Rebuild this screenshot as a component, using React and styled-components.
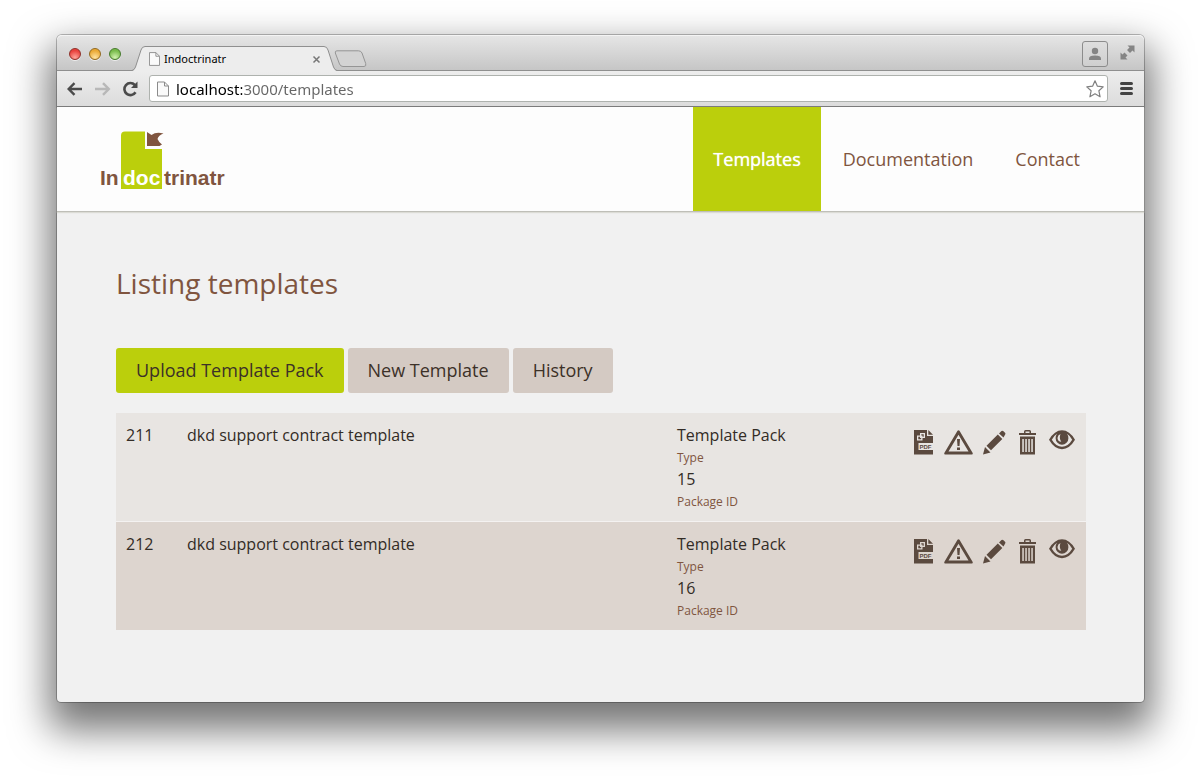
import React from "react";
import styled, { createGlobalStyle, css } from "styled-components";

const green = "#bbcf0c";
const brown = "#80553f";
const iconBrown = "#5b4a3f";

const GlobalStyle = createGlobalStyle`
  *, *::before, *::after { box-sizing: border-box; }
  body {
    margin: 0;
    background: #fff;
    font-family: "Open Sans", "Noto Sans", sans-serif;
    color: #332c26;
  }
`;

const Desktop = styled.div`
  padding: 35px 57px 78px;
`;

const BrowserWindow = styled.div`
  border-radius: 5px 5px 4px 4px;
  background: #f1f1f1;
  box-shadow: 0 0 0 1px rgba(0, 0, 0, 0.25), 0 20px 38px 8px rgba(0, 0, 0, 0.54);
`;

const TitleBar = styled.div`
  display: flex;
  align-items: flex-start;
  height: 36px;
  padding: 0 9px 0 12px;
  border-radius: 5px 5px 0 0;
  border-bottom: 1px solid #8f8f8f;
  background: linear-gradient(#e6e6e6, #c6c6c6);
  box-shadow: inset 0 1px 0 #f4f4f4;
`;

const Lights = styled.div`
  display: flex;
  gap: 8px;
  padding-top: 13px;
`;

const lightColors = {
  red: ["#ffa59a", "#e8413c", "#8f3029"],
  yellow: ["#ffe3a0", "#eaa934", "#92691f"],
  green: ["#d2f3b0", "#78bb4b", "#457a2b"],
};

const Light = styled.button`
  width: 12px;
  height: 12px;
  padding: 0;
  border: 1px solid ${(p) => lightColors[p.$tone][2]};
  border-radius: 50%;
  background: radial-gradient(circle at 50% 85%, ${(p) => lightColors[p.$tone][0]}, ${(p) => lightColors[p.$tone][1]} 70%);
  box-shadow: 0 1px 0 #eee;
`;

const TabStrip = styled.div`
  display: flex;
  flex: 1;
  align-items: flex-start;
  padding: 11px 0 0 11px;
  svg { display: block; flex: none; }
`;

const Tab = styled.div`
  display: flex;
  height: 25px;
`;

const TabBody = styled.div`
  display: flex;
  align-items: center;
  width: 179px;
  height: 25px;
  padding: 0 3px 0 4px;
  border-top: 1px solid #8f8f8f;
  background: #ededed;
`;

const TabTitle = styled.span`
  flex: 1;
  padding-left: 4px;
  font: 11px/16px "Noto Sans", "Open Sans", sans-serif;
  color: #000;
`;

const PlainButton = styled.button`
  display: flex;
  align-items: center;
  justify-content: center;
  padding: 0;
  border: 0;
  background: none;
  svg { display: block; }
`;

const NewTab = styled(PlainButton)`
  margin: 4px 0 0 -3px;
`;

const WindowTools = styled.div`
  display: flex;
  align-items: flex-start;
  gap: 11px;
  padding-top: 6px;
`;

const ProfileButton = styled(PlainButton)`
  width: 26px;
  height: 26px;
  border: 1px solid #8c8c8c;
  border-radius: 3px;
  background: linear-gradient(#dedede, #cfcfcf);
`;

const ExpandButton = styled(PlainButton)`
  width: 16px;
  height: 22px;
`;

const Toolbar = styled.div`
  display: flex;
  align-items: center;
  height: 36px;
  padding: 0 10px 0 9px;
  border-bottom: 1px solid #7b7b7b;
  background: linear-gradient(#ededed, #dcdcdc);
`;

const NavButtons = styled.div`
  display: flex;
  gap: 10px;
  padding-right: 10px;
`;

const AddressBar = styled.label`
  display: flex;
  flex: 1;
  align-items: center;
  height: 27px;
  margin-right: 11px;
  padding: 0 3px 0 7px;
  border: 1px solid #aeb2ae;
  border-radius: 3px;
  background: #fff;
  svg { display: block; flex: none; }
`;

const AddressInput = styled.input`
  flex: 1;
  min-width: 0;
  height: 22px;
  margin-left: 7px;
  padding: 0;
  border: 0;
  outline: 0;
  font: 15px/22px "Noto Sans", "Open Sans", sans-serif;
  color: transparent;
  background: linear-gradient(90deg, #000 66px, #666 66px);
  -webkit-background-clip: text;
  background-clip: text;
`;

const Header = styled.header`
  display: flex;
  justify-content: space-between;
  height: 105px;
  padding: 0 44px 0 43px;
  border-bottom: 1px solid #bfbfb8;
  background: #fdfdfd;
  box-shadow: 0 1px 1px #dcdcd6;
`;

const LogoLink = styled.a`
  padding-top: 24px;
  svg { display: block; }
`;

const Nav = styled.nav`
  display: flex;
  gap: 2px;
`;

const NavLink = styled.a`
  display: flex;
  align-items: center;
  padding: 0 20px;
  font-size: 18px;
  line-height: 24px;
  text-decoration: none;
  color: ${brown};
  ${(p) => p.$active && css`
    background: ${green};
    color: #fff;
    text-shadow: 0 0 1px #fff;
  `}
`;

const Main = styled.main`
  padding: 51px 58px 72px 59px;
`;

const Title = styled.h1`
  margin: 0;
  font-size: 28px;
  line-height: 40px;
  font-weight: 400;
  color: ${brown};
`;

const ButtonRow = styled.div`
  display: flex;
  gap: 4px;
  margin: 45px 0 20px;
`;

const ActionButton = styled.button`
  height: 45px;
  padding: 0 20px 2px;
  border: 0;
  border-radius: 3px;
  font: 18px/24px "Open Sans", sans-serif;
  color: #3c3128;
  background: ${(p) => (p.$primary ? green : "#d4cac3")};
`;

const Table = styled.table`
  width: 100%;
  table-layout: fixed;
  border-collapse: separate;
  border-spacing: 0;
`;

const Row = styled.tr`
  background: #e8e5e2;
  &:nth-child(even) { background: #ddd5cf; }
`;

const Cell = styled.td`
  width: ${(p) => p.$width || "auto"};
  padding: 11px 11px 9px 10px;
  vertical-align: top;
  font-size: 16px;
  line-height: 22px;
  ${Row} + ${Row} & { border-top: 1px solid #f4f2f1; }
`;

const Details = styled.dl`
  display: flex;
  flex-direction: column;
  margin: 0;
`;

const Detail = styled.div`
  display: flex;
  flex-direction: column-reverse;
`;

const Value = styled.dd`
  margin: 0;
`;

const Term = styled.dt`
  padding-top: 2px;
  font-size: 12px;
  line-height: 20px;
  color: ${brown};
`;

const Actions = styled.div`
  display: flex;
  justify-content: flex-end;
  align-items: flex-start;
  gap: 10px;
  padding-top: 6px;
  color: ${iconBrown};
`;

const IconLink = styled.a`
  color: inherit;
  svg { display: block; }
`;

const PageIcon = ({ width, height }) => (
  <svg width={width} height={height} viewBox="0 0 12 15" fill="#fafafa" stroke="#8b8b8b">
    <path d="M.5.5h7l4 4v10H.5z" />
    <path d="M7.500.5v4h4" fill="none" />
  </svg>
);

const Logo = () => (
  <svg width="128" height="60" viewBox="0 0 128 60" fontFamily='"Liberation Sans", Arial, sans-serif' fontWeight="700" fontSize="21">
    <path d="M25 .5H45V18H62V58H21V4.500Q21 .5 25 .5Z" fill={green} />
    <path d="M47 1L51.500 4Q56 .5 63.500 2.500Q58.500 4 57.500 8Q59 11.500 62 13.500L59.500 15H47Z" fill={brown} />
    <text x="0" y="54" fill={brown}>In</text>
    <text x="23" y="54" fill="#fff">doc</text>
    <text x="64" y="54" fill={brown}>trinatr</text>
  </svg>
);

const PdfIcon = () => (
  <svg width="20" height="25" viewBox="0 0 20 25" fill="currentColor">
    <path fillRule="evenodd" d="M0 0H13V6H19V13H4.500V20H19V24.500H0ZM6 3V5.500H3V10.500H8.500V8H11V3ZM7.300 4.300H9.700V6.700H8.500V5.500H7.300ZM4.300 6.800H6V8H7.200V9.200H4.300Z" />
    <path d="M14.300 0L19 4.700H14.300Z" />
    <text x="5.500" y="18.700" fontFamily='"Liberation Sans", Arial, sans-serif' fontWeight="700" fontSize="6">PDF</text>
  </svg>
);

const WarningIcon = () => (
  <svg width="29" height="25" viewBox="0 0 29 25" fill="currentColor">
    <path fillRule="evenodd" d="M13.500 .8Q14.500 -.4 15.500 .8L28.700 23Q29 24.500 28 24.500H1Q0 24.500 .3 23ZM14.500 4.800L4.500 21.500H24.500Z" />
    <path d="M13 9h3l-.5 7h-2zM13 17.500h3v2.500h-3z" />
  </svg>
);

const PencilIcon = () => (
  <svg width="23" height="25" viewBox="0 0 23 25" fill="currentColor">
    <path d="M0 24.500l2-7.500 5.500 5.500zM3.500 15.800L14.800 4.500l4.500 4.500L8 20.300zM16 3.500L18.500 1q1-.8 2 .2l1.500 1.500q1 1 0 2L20.500 7.600z" />
  </svg>
);

const TrashIcon = () => (
  <svg width="23" height="25" viewBox="0 0 23 25" fill="currentColor">
    <path fillRule="evenodd" d="M3 3h5V1.500Q8 0 9.500 0h4Q15 0 15 1.500V3h5v2H3zM9.500 3h4V1.500h-4zM4 6.500h15V24.500H4zM6.300 9v13h1.500V9zM9.300 9v13h1.500V9zM12.300 9v13h1.500V9zM15.300 9v13h1.500V9z" />
  </svg>
);

const EyeIcon = () => (
  <svg width="26" height="20" viewBox="0 0 26 20" fill="currentColor">
    <path fillRule="evenodd" d="M0 9.800Q5.500 .3 13 .3T26 9.800Q20.500 19.200 13 19.200T0 9.800ZM2.800 9.800Q7 16.800 13 16.800T23.200 9.800Q21 5.500 18 3.700Q19.400 5.500 19.400 8.300A6.400 6.400 0 0 1 6.600 8.300Q6.600 5.500 8 3.700Q5 5.500 2.800 9.800ZM8.500 8A4.500 4.500 0 0 1 11.500 4Q9.800 8 12.300 11.800Q8.700 11.500 8.500 8Z" />
  </svg>
);

const rowActions = [
  ["Create PDF", PdfIcon],
  ["Show warnings", WarningIcon],
  ["Edit", PencilIcon],
  ["Delete", TrashIcon],
  ["Preview", EyeIcon],
];

const templates = [
  { id: 211, name: "dkd support contract template", type: "Template Pack", packageId: 15 },
  { id: 212, name: "dkd support contract template", type: "Template Pack", packageId: 16 },
];

const BrowserChrome = () => (
  <>
    <TitleBar>
      <Lights>
        <Light $tone="red" aria-label="Close window" />
        <Light $tone="yellow" aria-label="Minimize window" />
        <Light $tone="green" aria-label="Zoom window" />
      </Lights>
      <TabStrip>
        <Tab>
          <svg width="13" height="25" viewBox="0 0 13 25">
            <path d="M0 25Q2.500 24 3.500 21L9 4Q10 .5 13 .5V25Z" fill="#ededed" />
            <path d="M0 24.500Q2.500 24 3.500 21L9 4Q10 .5 13 .5" fill="none" stroke="#8f8f8f" />
          </svg>
          <TabBody>
            <PageIcon width="11" height="14" />
            <TabTitle>Indoctrinatr</TabTitle>
            <PlainButton aria-label="Close tab">
              <svg width="9" height="9" viewBox="0 0 9 9" stroke="#777" strokeWidth="1.500"><path d="M1.500 1.500l6 6M7.500 1.500l-6 6" /></svg>
            </PlainButton>
          </TabBody>
          <svg width="13" height="25" viewBox="0 0 13 25">
            <path d="M13 25Q10.500 24 9.500 21L4 4Q3 .5 0 .5V25Z" fill="#ededed" />
            <path d="M13 24.500Q10.500 24 9.500 21L4 4Q3 .5 0 .5" fill="none" stroke="#8f8f8f" />
          </svg>
        </Tab>
        <NewTab aria-label="New tab">
          <svg width="33" height="18" viewBox="0 0 33 18"><path d="M3 .8H24.500Q27 .8 28 3L31.700 13.500Q32.500 16.500 30 16.500H9Q6.500 16.500 5.500 14L1.300 3Q.8 .8 3 .8Z" fill="#d3d3d3" stroke="#959595" /></svg>
        </NewTab>
      </TabStrip>
      <WindowTools>
        <ProfileButton aria-label="Profile">
          <svg width="14" height="14" viewBox="0 0 14 14" fill="#858585"><circle cx="7" cy="4" r="3.200" /><path d="M1 13V11.500Q1 8.500 7 8.500T13 11.500V13Z" /></svg>
        </ProfileButton>
        <ExpandButton aria-label="Full screen">
          <svg width="15" height="15" viewBox="0 0 15 15" fill="#858585"><path d="M7.500 .5H14.500V7.500L12.500 5.500 10 8 7 5 9.500 2.500ZM.5 7.500V14.500H7.500L5.500 12.500 7.500 10.500 4.500 7.500 2.500 9.500Z" /></svg>
        </ExpandButton>
      </WindowTools>
    </TitleBar>
    <Toolbar>
      <NavButtons>
        <PlainButton aria-label="Back">
          <svg width="18" height="16" viewBox="0 0 18 16" fill="none" stroke="#4b4b4b" strokeWidth="2.400"><path d="M16 8H3M8.500 2.200L2.700 8l5.800 5.800" /></svg>
        </PlainButton>
        <PlainButton aria-label="Forward">
          <svg width="18" height="16" viewBox="0 0 18 16" fill="none" stroke="#b8b8b8" strokeWidth="2.400"><path d="M1 8H14M9 2.200L14.800 8 9 13.800" /></svg>
        </PlainButton>
        <PlainButton aria-label="Reload">
          <svg width="17" height="16" viewBox="0 0 17 16" fill="none" stroke="#4b4b4b" strokeWidth="2.600"><path d="M13.500 11.200A6 6 0 1 1 12.800 4" /><path d="M15.500 .5V7H9Z" fill="#4b4b4b" stroke="none" /></svg>
        </PlainButton>
      </NavButtons>
      <AddressBar>
        <PageIcon width="12" height="16" />
        <AddressInput aria-label="Address" defaultValue="localhost:3000/templates" spellCheck={false} />
        <svg width="18" height="18" viewBox="0 0 18 18" fill="#fff" stroke="#808080" strokeWidth="1.200" strokeLinejoin="round"><path d="M9 .8L11.400 6.200 17.200 6.900 12.900 10.800 14.100 16.800 9 13.800 3.900 16.800 5.100 10.800 .8 6.900 6.600 6.200Z" /></svg>
      </AddressBar>
      <PlainButton aria-label="Menu">
        <svg width="15" height="15" viewBox="0 0 15 15" stroke="#444" strokeWidth="3" strokeLinecap="round"><path d="M2.500 2.500h10M2.500 7.500h10M2.500 12.500h10" /></svg>
      </PlainButton>
    </Toolbar>
  </>
);

export default function App() {
  return (
    <>
      <GlobalStyle />
      <Desktop>
        <BrowserWindow>
          <BrowserChrome />
          <Header>
            <LogoLink href="#home" aria-label="Indoctrinatr"><Logo /></LogoLink>
            <Nav>
              <NavLink href="#templates" $active>Templates</NavLink>
              <NavLink href="#documentation">Documentation</NavLink>
              <NavLink href="#contact">Contact</NavLink>
            </Nav>
          </Header>
          <Main>
            <Title>Listing templates</Title>
            <ButtonRow>
              <ActionButton $primary>Upload Template Pack</ActionButton>
              <ActionButton>New Template</ActionButton>
              <ActionButton>History</ActionButton>
            </ButtonRow>
            <Table>
              <tbody>
                {templates.map((t) => (
                  <Row key={t.id}>
                    <Cell $width="61px">{t.id}</Cell>
                    <Cell>{t.name}</Cell>
                    <Cell $width="210px">
                      <Details>
                        <Detail><Term>Type</Term><Value>{t.type}</Value></Detail>
                        <Detail><Term>Package ID</Term><Value>{t.packageId}</Value></Detail>
                      </Details>
                    </Cell>
                    <Cell $width="209px">
                      <Actions>
                        {rowActions.map(([label, Icon]) => (
                          <IconLink key={label} href={`#${t.id}`} aria-label={label}><Icon /></IconLink>
                        ))}
                      </Actions>
                    </Cell>
                  </Row>
                ))}
              </tbody>
            </Table>
          </Main>
        </BrowserWindow>
      </Desktop>
    </>
  );
}
